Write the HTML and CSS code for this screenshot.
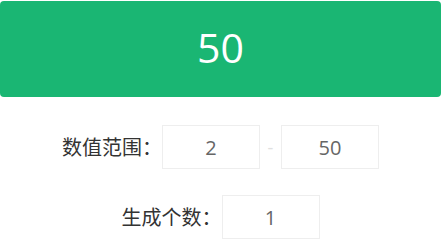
FILE: index.html
```html
<!DOCTYPE html>
<html lang="zh-CN">
<head>
<meta charset="utf-8">
<title>随机数生成</title>
<link rel="stylesheet" href="styles.css">
</head>
<body>
<div class="app">
  <div class="result">50</div>
  <div class="form">
    <div class="row">
      <span class="label">数值范围：</span>
      <input class="field" type="text" value="2">
      <span class="dash">-</span>
      <input class="field" type="text" value="50">
    </div>
    <div class="row">
      <span class="label">生成个数：</span>
      <input class="field" type="text" value="1">
    </div>
  </div>
</div>
</body>
</html>
```

FILE: styles.css
```css
html, body {
  margin: 0;
  padding: 0;
  background: #ffffff;
}

.app {
  width: 441px;
  padding-top: 1px;
  font-family: "Open Sans", "Noto Sans CJK SC", sans-serif;
}

.result {
  box-sizing: border-box;
  height: 96px;
  padding-bottom: 4px;
  border-radius: 4px;
  background: #1ab673;
  color: #ffffff;
  font-size: 41px;
  display: flex;
  align-items: center;
  justify-content: center;
}

.form {
  margin-top: 28px;
  display: flex;
  flex-direction: column;
  gap: 26px;
}

.row {
  display: flex;
  justify-content: center;
  align-items: center;
}

.label {
  font-family: "Noto Sans CJK SC", sans-serif;
  font-size: 20px;
  color: #333333;
  line-height: 44px;
}

.field {
  box-sizing: border-box;
  width: 98px;
  height: 44px;
  margin: 0;
  padding: 0;
  border: 1px solid #eeeeee;
  outline: none;
  text-align: center;
  font-family: "Open Sans", sans-serif;
  font-size: 20px;
  color: #666666;
  background: #ffffff;
}

.dash {
  width: 21px;
  text-align: center;
  color: #e0e0e0;
  font-size: 18px;
}
```
